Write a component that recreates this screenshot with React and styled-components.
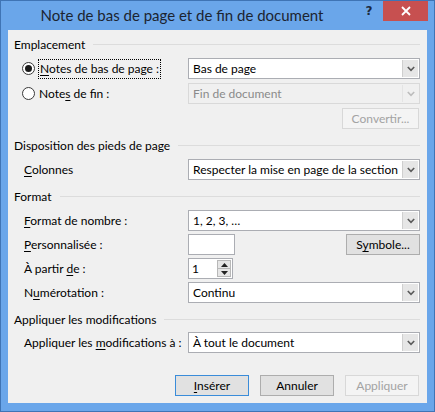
import React from "react";
import styled, { createGlobalStyle, css } from "styled-components";

const FONT = `"Lato", "Noto Sans", sans-serif`;

const Global = createGlobalStyle`
  html, body { margin: 0; padding: 0; background: #6aa6ea; }
  body { font-family: ${FONT}; font-size: 12px; color: #000; }
  * { box-sizing: border-box; }
`;

const Window = styled.div`
  width: 435px;
  height: 412px;
  background: #6aa6ea;
  border: 1px solid #3f74b5;
  display: flex;
  flex-direction: column;
  padding: 0 7px 8px 7px;
`;

const TitleBar = styled.div`
  height: 29px;
  display: flex;
  align-items: flex-start;
`;

const Title = styled.div`
  flex: 1;
  text-align: center;
  font-family: ${FONT};
  font-size: 15px;
  color: #1c2430;
  padding-top: 5px;
`;

const HelpButton = styled.div`
  width: 26px;
  height: 20px;
  display: flex;
  align-items: center;
  justify-content: center;
  font-family: "DejaVu Sans", sans-serif;
  font-weight: bold;
  font-size: 12px;
  color: #1c2a40;
  margin-right: 1px;
`;

const CloseButton = styled.div`
  width: 45px;
  height: 20px;
  margin-right: -1px;
  background: #c75050;
  display: flex;
  align-items: center;
  justify-content: center;
`;

const Content = styled.div`
  flex: 1;
  background: #f0f0f0;
  padding: 6px 7px 7px 6px;
  display: flex;
  flex-direction: column;
`;

const GroupHeader = styled.div`
  height: 16px;
  display: flex;
  align-items: center;
  gap: 8px;
  margin-top: ${(p) => p.$mt || 0}px;
  margin-bottom: ${(p) => p.$mb ?? 6}px;
  white-space: nowrap;
  &::after {
    content: "";
    flex: 1;
    height: 1px;
    background: #dcdcdc;
    margin-top: 1px;
  }
`;

const Rows = styled.div`
  display: flex;
  flex-direction: column;
  gap: ${(p) => p.$gap || 4}px;
`;

const Row = styled.div`
  display: grid;
  grid-template-columns: 164px 232px;
  align-items: center;
  height: 21px;
  padding-left: 10px;
`;

const Label = styled.span`
  white-space: nowrap;
`;

const U = styled.span`
  text-decoration: underline;
  text-underline-offset: 2px;
`;

const RadioLabel = styled.label`
  display: flex;
  align-items: center;
  gap: 4px;
  white-space: nowrap;
  margin-left: -2px;
`;

const RadioCircle = styled.span`
  width: 13px;
  height: 13px;
  border-radius: 50%;
  border: 1px solid #3a3a3a;
  background: #fff;
  display: flex;
  align-items: center;
  justify-content: center;
  &::after {
    content: "";
    width: 7px;
    height: 7px;
    border-radius: 50%;
    background: ${(p) => (p.$checked ? "#1a1a1a" : "transparent")};
  }
`;

const Focus = styled.span`
  outline: 1px dotted #000;
  outline-offset: 0;
  padding: 1px 1px 2px 1px;
`;

const SelectBox = styled.div`
  height: 21px;
  width: 232px;
  display: flex;
  align-items: stretch;
  border: 1px solid ${(p) => (p.$disabled ? "#d9d9d9" : "#abadb3")};
  background: ${(p) => (p.$disabled ? "#f0f0f0" : "#fff")};
  color: ${(p) => (p.$disabled ? "#8a8a8a" : "#000")};
`;

const SelectText = styled.span`
  flex: 1;
  padding-left: 4px;
  display: flex;
  align-items: center;
  white-space: nowrap;
`;

const DropBtn = styled.span`
  width: 16px;
  margin: 1px 1px 1px 0;
  display: flex;
  align-items: center;
  justify-content: center;
  background: ${(p) => (p.$disabled ? "#f0f0f0" : "#e6e6e6")};
  border-left: 1px solid ${(p) => (p.$disabled ? "#e4e4e4" : "#cfcfcf")};
`;

const Chevron = ({ color }) => (
  <svg width="8" height="6" viewBox="0 0 8 6">
    <path d="M0.8 1 L4 4.4 L7.2 1" fill="none" stroke={color} strokeWidth="1.6" />
  </svg>
);

const Select = ({ value, disabled }) => (
  <SelectBox $disabled={disabled}>
    <SelectText>{value}</SelectText>
    <DropBtn $disabled={disabled}>
      <Chevron color={disabled ? "#bdbdbd" : "#5a5a5a"} />
    </DropBtn>
  </SelectBox>
);

const Control = styled.div`
  display: flex;
  align-items: center;
  justify-content: ${(p) => (p.$spread ? "space-between" : "flex-start")};
  height: 21px;
`;

const TextInput = styled.div`
  width: ${(p) => p.$w}px;
  height: 21px;
  background: #fff;
  border: 1px solid #abadb3;
  display: flex;
  align-items: center;
  padding-left: 3px;
`;

const Spin = styled.div`
  flex: 1;
`;

const SpinBtns = styled.div`
  width: 15px;
  height: 100%;
  display: flex;
  flex-direction: column;
  padding: 1px 1px 1px 0;
`;

const SpinBtn = styled.span`
  flex: 1;
  background: #e6e6e6;
  border: 1px solid #b8b8b8;
  margin-top: ${(p) => (p.$down ? "-1px" : "0")};
  display: flex;
  align-items: center;
  justify-content: center;
`;

const Button = styled.div`
  width: ${(p) => p.$w || 74}px;
  height: 21px;
  display: flex;
  align-items: center;
  justify-content: center;
  white-space: nowrap;
  border: 1px solid #adadad;
  background: #e1e1e1;
  color: #000;
  ${(p) =>
    p.$default &&
    css`
      border: 1px solid #3a8cd9;
    `}
  ${(p) =>
    p.$disabled &&
    css`
      border-color: #d8d8d8;
      background: #f4f4f4;
      color: #a3a3a3;
    `}
`;

const ConvertRow = styled.div`
  display: flex;
  justify-content: flex-end;
  padding-right: 1px;
`;

const Footer = styled.div`
  margin-top: auto;
  display: flex;
  justify-content: flex-end;
  gap: 11px;
  padding-right: 1px;
`;

export default function App() {
  return (
    <>
      <Global />
      <Window>
        <TitleBar>
          <Title>Note de bas de page et de fin de document</Title>
          <HelpButton>?</HelpButton>
          <CloseButton>
            <svg width="10" height="10" viewBox="0 0 10 10">
              <path d="M1 1 L9 9 M9 1 L1 9" stroke="#fff" strokeWidth="1.8" />
            </svg>
          </CloseButton>
        </TitleBar>
        <Content>
          <GroupHeader>Emplacement</GroupHeader>
          <Rows $gap={4}>
            <Row>
              <RadioLabel>
                <RadioCircle $checked />
                <Focus>
                  <U>N</U>otes de bas de page :
                </Focus>
              </RadioLabel>
              <Select value="Bas de page" />
            </Row>
            <Row>
              <RadioLabel>
                <RadioCircle />
                <span>
                  Note<U>s</U> de fin :
                </span>
              </RadioLabel>
              <Select value="Fin de document" disabled />
            </Row>
            <ConvertRow>
              <Button $w={77} $disabled>
                Convertir...
              </Button>
            </ConvertRow>
          </Rows>

          <GroupHeader $mt={8}>Disposition des pieds de page</GroupHeader>
          <Rows>
            <Row>
              <Label>
                <U>C</U>olonnes
              </Label>
              <Select value="Respecter la mise en page de la section" />
            </Row>
          </Rows>

          <GroupHeader $mt={8}>Format</GroupHeader>
          <Rows $gap={3}>
            <Row>
              <Label>
                <U>F</U>ormat de nombre :
              </Label>
              <Select value="1, 2, 3, …" />
            </Row>
            <Row>
              <Label>
                <U>P</U>ersonnalisée :
              </Label>
              <Control $spread>
                <TextInput $w={47} />
                <Button $w={74}>
                  <span>
                    S<U>y</U>mbole...
                  </span>
                </Button>
              </Control>
            </Row>
            <Row>
              <Label>
                À partir <U>d</U>e :
              </Label>
              <Control>
                <TextInput $w={45}>
                  <Spin>1</Spin>
                  <SpinBtns>
                    <SpinBtn>
                      <svg width="7" height="4" viewBox="0 0 7 4">
                        <path d="M0 4 L3.5 0 L7 4 Z" fill="#222" />
                      </svg>
                    </SpinBtn>
                    <SpinBtn $down>
                      <svg width="7" height="4" viewBox="0 0 7 4">
                        <path d="M0 0 L3.5 4 L7 0 Z" fill="#222" />
                      </svg>
                    </SpinBtn>
                  </SpinBtns>
                </TextInput>
              </Control>
            </Row>
            <Row>
              <Label>
                N<U>u</U>mérotation :
              </Label>
              <Select value="Continu" />
            </Row>
          </Rows>

          <GroupHeader $mt={8} $mb={5}>Appliquer les modifications</GroupHeader>
          <Rows>
            <Row>
              <Label>
                Appliquer les <U>m</U>odifications à :
              </Label>
              <Select value="À tout le document" />
            </Row>
          </Rows>

          <Footer>
            <Button $default>
              <span>
                <U>I</U>nsérer
              </span>
            </Button>
            <Button>Annuler</Button>
            <Button $disabled>Appliquer</Button>
          </Footer>
        </Content>
      </Window>
    </>
  );
}
